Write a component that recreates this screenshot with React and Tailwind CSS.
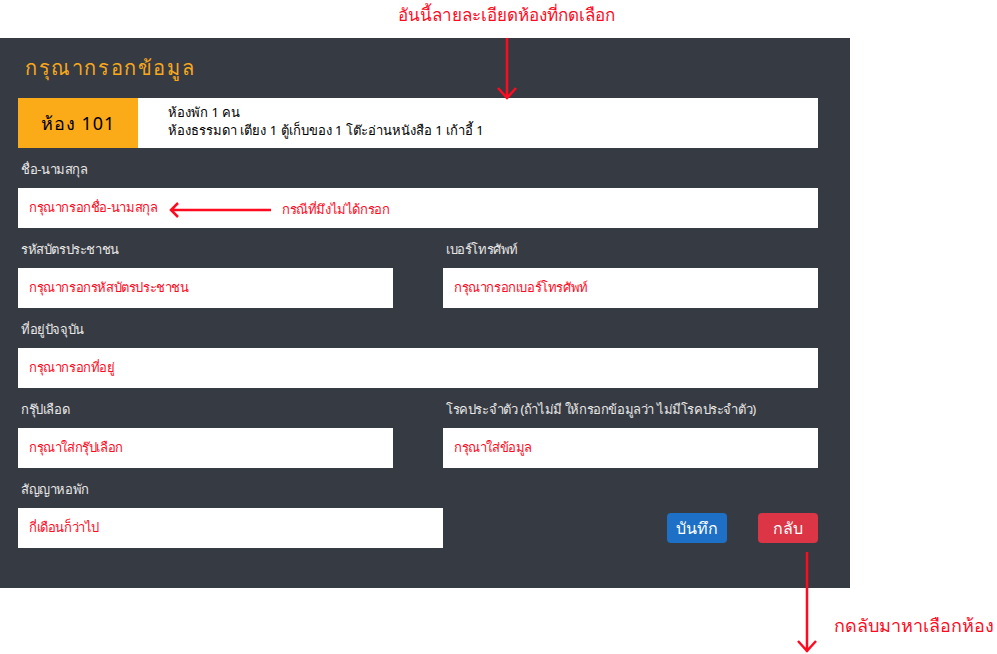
import React from 'react';

const font = { fontFamily: '"Noto Sans", "DejaVu Sans", sans-serif' };

function Field({ label, placeholder, className = '' }) {
  return (
    <div className={className}>
      <div className="h-10 flex items-center pl-[3px] pt-[4px] text-[13px] tracking-[-0.4px] text-[#e8e8e8]">{label}</div>
      <div className="h-10 bg-white flex items-center px-[11px] text-[13px] tracking-[-0.4px] text-[#ff0a1e]">{placeholder}</div>
    </div>
  );
}

export default function App() {
  return (
    <div className="relative w-[997px] h-[654px] bg-white overflow-hidden" style={font}>
      {/* annotations */}
      <div className="absolute left-[398px] top-[2px] text-[17px] text-[#ff0a1e]">อันนี้ลายละเอียดห้องที่กดเลือก</div>
      <svg className="absolute left-[497px] top-[38px] z-10" width="20" height="64" viewBox="0 0 20 64">
        <path d="M10 0 V61 M1 50 L10 60 L19 50" stroke="#ff0a1e" strokeWidth="2.5" fill="none" />
      </svg>

      <div className="absolute left-[834px] top-[612px] text-[18px] text-[#ff0a1e]">กดลับมาหาเลือกห้อง</div>
      <svg className="absolute left-[797px] top-[552px]" width="20" height="102" viewBox="0 0 20 102">
        <path d="M10 0 V100 M1 89 L10 99 L19 89" stroke="#ff0a1e" strokeWidth="2.5" fill="none" />
      </svg>

      <div className="mt-[38px] w-[850px] bg-[#363a42] pl-[18px] pr-[32px] pb-10">
        <div className="h-[60px] flex items-center pl-[7px] text-[20px] tracking-[1.6px] text-[#f8a81c]">กรุณากรอกข้อมูล</div>

        <div className="h-[50px] bg-white flex">
          <div className="w-[120px] bg-[#fbab18] flex items-center justify-center text-[18px] tracking-[1px] text-black">ห้อง 101</div>
          <div className="pl-[30px] pb-[4px] flex flex-col justify-center text-[13px] leading-[18px] text-black">
            <div>ห้องพัก 1 คน</div>
            <div>ห้องธรรมดา เตียง 1 ตู้เก็บของ 1 โต๊ะอ่านหนังสือ 1 เก้าอี้ 1</div>
          </div>
        </div>

        <div className="relative">
          <Field label="ชื่อ-นามสกุล" placeholder="กรุณากรอกชื่อ-นามสกุล" />
          <div className="absolute left-[150px] top-[52px] flex items-center gap-[10px] text-[13px] tracking-[-0.4px] text-[#ff0a1e]">
            <svg width="104" height="16" viewBox="0 0 104 16">
              <path d="M103 8 H3 M10 1 L3 8 L10 15" stroke="#ff0a1e" strokeWidth="2.5" fill="none" />
            </svg>
            <span>กรณีที่มึงไม่ได้กรอก</span>
          </div>
        </div>

        <div className="grid grid-cols-2 gap-x-[50px]">
          <Field label="รหัสบัตรประชาชน" placeholder="กรุณากรอกรหัสบัตรประชาชน" />
          <Field label="เบอร์โทรศัพท์" placeholder="กรุณากรอกเบอร์โทรศัพท์" />
        </div>

        <Field label="ที่อยู่ปัจจุบัน" placeholder="กรุณากรอกที่อยู่" />

        <div className="grid grid-cols-2 gap-x-[50px]">
          <Field label="กรุ๊ปเลือด" placeholder="กรุณาใส่กรุ๊ปเลือก" />
          <Field label="โรคประจำตัว (ถ้าไม่มี ให้กรอกข้อมูลว่า ไม่มีโรคประจำตัว)" placeholder="กรุณาใส่ข้อมูล" />
        </div>

        <div className="flex items-end">
          <Field label="สัญญาหอพัก" placeholder="กี่เดือนก็ว่าไป" className="w-[425px]" />
          <div className="ml-auto h-10 flex items-center gap-[31px]">
            <button className="w-[60px] h-[30px] rounded-[4px] bg-[#1e6fc6] text-white text-[16px]">บันทึก</button>
            <button className="w-[60px] h-[30px] rounded-[4px] bg-[#dc3545] text-white text-[16px]">กลับ</button>
          </div>
        </div>
      </div>
    </div>
  );
}
